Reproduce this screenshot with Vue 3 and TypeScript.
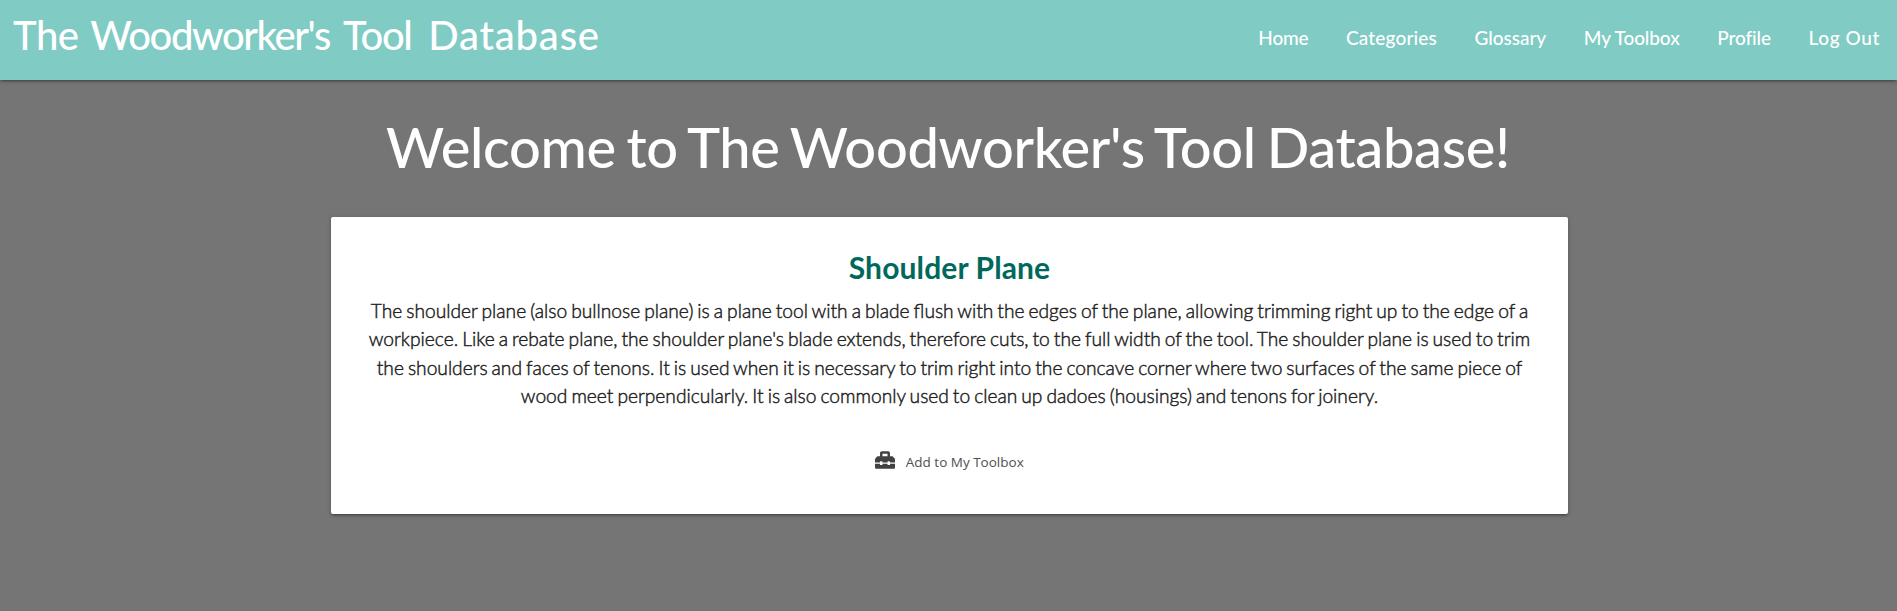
<script setup lang="ts">
const links: { id: string; label: string }[] = [
  { id: 'home', label: 'Home' },
  { id: 'categories', label: 'Categories' },
  { id: 'glossary', label: 'Glossary' },
  { id: 'toolbox', label: 'My Toolbox' },
  { id: 'profile', label: 'Profile' },
  { id: 'logout', label: 'Log Out' },
]
const description: string[] = [
  'The shoulder plane (also bullnose plane) is a plane tool with a blade flush with the edges of the plane, allowing trimming right up to the edge of a',
  "workpiece. Like a rebate plane, the shoulder plane's blade extends, therefore cuts, to the full width of the tool. The shoulder plane is used to trim",
  'the shoulders and faces of tenons. It is used when it is necessary to trim right into the concave corner where two surfaces of the same piece of',
  'wood meet perpendicularly. It is also commonly used to clean up dadoes (housings) and tenons for joinery.',
]
</script>

<template>
  <div class="page">
    <nav class="nav">
      <a class="brand">The <span class="tight">Woodworker's Tool</span> <span class="wide">Database</span></a>
      <ul class="links">
        <li v-for="l in links" :key="l.id" :class="['link', l.id]"><a>{{ l.label }}</a></li>
      </ul>
    </nav>
    <h1 class="welcome">Welcome to The Woodworker's Tool Database!</h1>
    <section class="card">
      <h2 class="title">Shoulder Plane</h2>
      <p class="text"><span v-for="d in description" :key="d" class="row">{{ d }}</span></p>
      <a class="add">
        <svg class="icon" viewBox="0 0 512 512"><path fill="currentColor" d="M502.63 214.63l-45.25-45.25c-6-6-14.14-9.38-22.63-9.38H384V80c0-26.51-21.49-48-48-48H176c-26.51 0-48 21.49-48 48v80H77.25c-8.49 0-16.63 3.38-22.63 9.38L9.37 214.63c-6 6-9.37 14.14-9.37 22.63V320h128v-16c0-8.84 7.16-16 16-16h32c8.84 0 16 7.16 16 16v16h128v-16c0-8.84 7.16-16 16-16h32c8.84 0 16 7.16 16 16v16h128v-82.74c0-8.49-3.37-16.63-9.37-22.63zM320 160H192V96h128v64zm64 208c0 8.84-7.16 16-16 16h-32c-8.84 0-16-7.16-16-16v-16H192v16c0 8.84-7.16 16-16 16h-32c-8.84 0-16-7.16-16-16v-16H0v96c0 17.67 14.33 32 32 32h448c17.67 0 32-14.33 32-32v-96H384v16z"/></svg>
        <span class="add-label">Add to My Toolbox</span>
      </a>
    </section>
  </div>
</template>

<style>
html, body { margin: 0; background: #757575; }
</style>
<style scoped>
.page { height: 611px; background: #757575; font-family: Lato, sans-serif; overflow: hidden; }
.nav { height: 80px; box-sizing: border-box; background: #80cbc4; color: #fff; display: flex; justify-content: space-between; align-items: flex-start; padding: 0 17px 0 13px; box-shadow: 0 2px 2px 0 rgba(0,0,0,.14), 0 3px 1px -2px rgba(0,0,0,.12), 0 1px 5px 0 rgba(0,0,0,.2); }
.brand { font-size: 40px; line-height: 71px; font-weight: 500; letter-spacing: -.5px; word-spacing: 2.3px; white-space: nowrap; }
.tight { letter-spacing: -1.4px; word-spacing: 5.5px; }
.wide { letter-spacing: .8px; margin-left: 5px; }
.links { display: flex; list-style: none; gap: 37.6px; margin: 0; padding: 0; font-size: 19px; line-height: 75px; font-weight: 500; white-space: nowrap; }
.home { letter-spacing: -.2px; }
.categories { letter-spacing: .16px; }
.glossary { letter-spacing: -.05px; }
.toolbox { letter-spacing: -.1px; }
.profile { letter-spacing: -.1px; }
.logout { letter-spacing: .6px; }
.welcome { margin: 36px 1px 0 0; font-size: 56px; line-height: 62px; font-weight: 500; letter-spacing: -.35px; word-spacing: -3px; color: #fff; text-align: center; white-space: nowrap; }
.card { width: 1237px; height: 297px; margin: 39px 0 0 331px; padding-top: 32px; box-sizing: border-box; background: #fff; border-radius: 2px; text-align: center; box-shadow: 0 2px 2px 0 rgba(0,0,0,.14), 0 3px 1px -2px rgba(0,0,0,.12), 0 1px 5px 0 rgba(0,0,0,.2); }
.title { margin: 0; font-size: 30px; line-height: 36px; font-weight: 700; letter-spacing: .12px; color: #00695c; }
.text { margin: 12px 0 0; font-size: 19.2px; line-height: 28.4px; font-weight: 300; word-spacing: -1.2px; color: #212121; -webkit-text-stroke: .45px #212121; }
.row { display: block; white-space: nowrap; }
.add { display: flex; justify-content: center; height: 20px; gap: 10.5px; margin-top: 39.4px; font-family: "Open Sans", sans-serif; font-size: 13.5px; line-height: 25px; color: #424242; }
.icon { width: 20px; height: 20px; }
.add-label { color: #505050; }
</style>
